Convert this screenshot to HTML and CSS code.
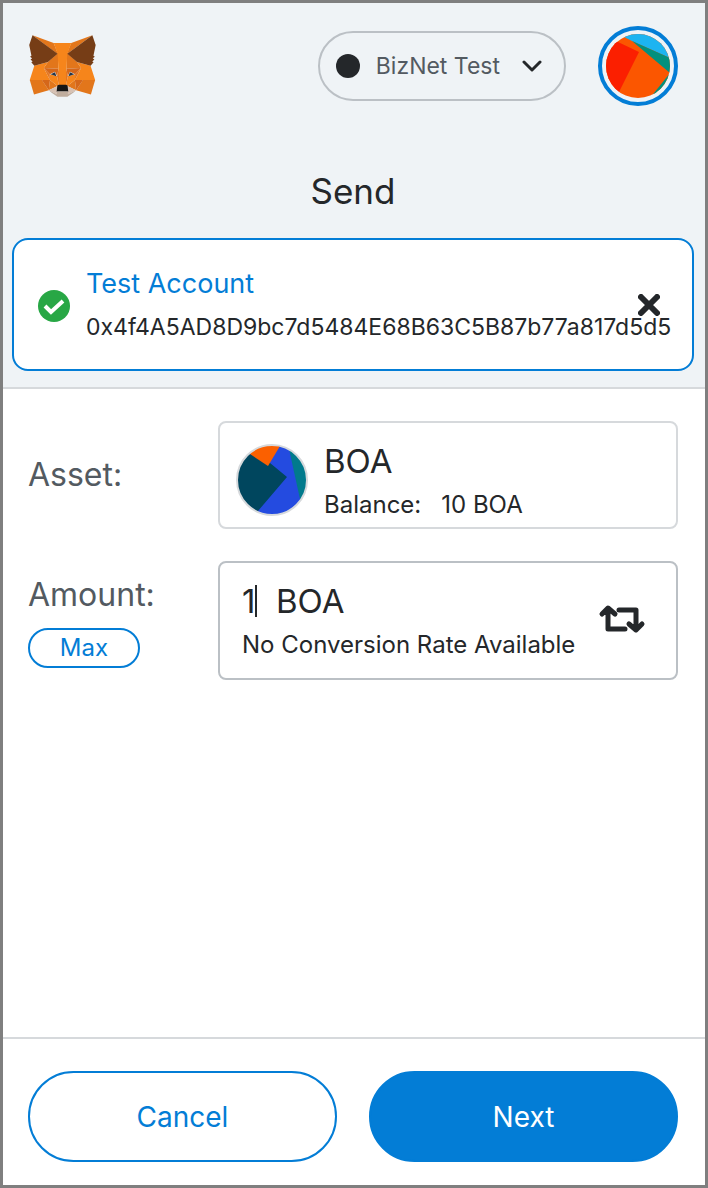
FILE: index.html
```html
<!DOCTYPE html>
<html lang="en">
<head>
<meta charset="utf-8">
<meta name="viewport" content="width=device-width, initial-scale=1">
<title>Send</title>
<link rel="stylesheet" href="styles.css">
</head>
<body>
<div class="app">
  <header class="top">
    <a class="logo" href="#" aria-label="Home">
      <svg viewBox="31 35 257 238" aria-hidden="true">
        <g fill="#e2761b">
          <polygon points="274.1,35.5 174.6,109.4 193,65.8"/>
          <polygon points="44.4,35.5 143.1,110.1 125.6,65.8"/>
          <polygon points="238.3,206.8 211.8,247.4 268.5,263 284.8,207.7"/>
          <polygon points="33.9,207.7 50.1,263 106.8,247.4 80.3,206.8"/>
          <polygon points="103.6,138.2 87.8,162.1 144.1,164.6 142.1,104.1"/>
          <polygon points="214.9,138.2 175.9,103.4 174.6,164.6 230.8,162.1"/>
          <polygon points="106.8,247.4 140.6,230.9 111.4,208.1"/>
          <polygon points="177.9,230.9 211.8,247.4 207.1,208.1"/>
        </g>
        <g fill="#d7c1b3">
          <polygon points="211.8,247.4 177.9,230.9 180.6,253 180.3,262.3"/>
          <polygon points="106.8,247.4 138.3,262.3 138.1,253 140.6,230.9"/>
        </g>
        <g fill="#d5671a">
          <polygon points="106.8,247.4 111.6,206.8 80.3,207.7"/>
          <polygon points="207,206.8 211.8,247.4 238.3,207.7"/>
          <polygon points="230.8,162.1 174.6,164.6 179.8,193.5 188.1,176.1 208.1,185.2"/>
          <polygon points="110.6,185.2 130.6,176.1 138.8,193.5 144.1,164.6 87.8,162.1"/>
        </g>
        <g fill="#e4751f">
          <polygon points="87.8,162.1 111.4,208.1 110.6,185.2"/>
          <polygon points="208.1,185.2 207.1,208.1 230.8,162.1"/>
          <polygon points="144.1,164.6 138.8,193.5 145.4,227.6 146.9,182.7"/>
          <polygon points="174.6,164.6 171.9,182.6 173.1,227.6 179.8,193.5"/>
        </g>
        <g fill="#f6851b">
          <polygon points="179.8,193.5 173.1,227.6 177.9,230.9 207.1,208.1 208.1,185.2"/>
          <polygon points="110.6,185.2 111.4,208.1 140.6,230.9 145.4,227.6 138.8,193.5"/>
          <polygon points="267.2,153.5 214.9,138.2 230.8,162.1 207.1,208.1 238.3,207.7 284.8,207.7"/>
          <polygon points="103.6,138.2 51.3,153.5 33.9,207.7 80.3,207.7 111.4,208.1 87.8,162.1"/>
          <polygon points="174.6,164.6 177.9,106.9 193.1,65.8 125.6,65.8 140.6,106.9 144.1,164.6 145.3,182.8 145.4,227.6 173.1,227.6 173.3,182.8"/>
        </g>
        <g fill="#233447">
          <polygon points="136,193.5 114,186 130.5,178"/>
          <polygon points="182.5,193.5 188,178 204.5,186"/>
        </g>
        <polygon fill="#c0ad9e" points="180.3,262.3 180.6,253 178.1,250.8 140.4,250.8 138.1,253 138.3,262.3 106.8,247.4 117.8,256.4 140.1,271.9 178.4,271.9 200.8,256.4 211.8,247.4"/>
        <polygon fill="#161616" points="179,229 173.1,226 145.4,226 139.6,229 137,253 140.4,250.8 178.1,250.8 181.6,253"/>
        <g fill="#763d16">
          <polygon points="278.3,114.2 286.8,73.4 274.1,35.5 177.9,106.9 214.9,138.2 267.2,153.5 278.8,140 273.8,136.4 281.8,129.1 275.6,124.3 283.6,118.2"/>
          <polygon points="31.8,73.4 40.3,114.2 34.9,118.2 42.9,124.3 36.8,129.1 44.8,136.4 39.8,140 51.3,153.5 103.6,138.2 140.6,106.9 44.4,35.5"/>
        </g>
      </svg>
    </a>
    <button class="network" type="button">
      <span class="dot"></span>
      <span class="network-name">BizNet Test</span>
      <svg class="chevron" viewBox="0 0 20 12" aria-hidden="true"><path d="M2 2l8 8 8-8"/></svg>
    </button>
    <button class="avatar" type="button" aria-label="Account menu">
      <svg viewBox="0 0 64 64" aria-hidden="true">
        <clipPath id="avatar-clip"><circle cx="32" cy="32" r="32"/></clipPath>
        <g clip-path="url(#avatar-clip)">
          <path fill="#fb5600" d="M0 0h64v64H0z"/>
          <path fill="#1cb4f1" d="M14 0h50v24L26 7 18 3z"/>
          <path fill="#02907d" d="M26 7l38 17v15z"/>
          <path fill="#02907d" d="M64 39v25H44z"/>
          <path fill="#fb1f00" d="M0 2l12 6 21 10-20 40-13 6z"/>
        </g>
      </svg>
    </button>
  </header>

  <section class="recipient">
    <h1 class="title">Send</h1>
    <div class="card">
      <svg class="check" viewBox="0 0 32 32" aria-hidden="true">
        <circle cx="16" cy="16" r="16" fill="#28a745"/>
        <path d="M7 16l6 6L25 11" fill="none" stroke="#fff" stroke-width="4"/>
      </svg>
      <div class="account">
        <div class="account-name">Test Account</div>
        <div class="address">0x4f4A5AD8D9bc7d5484E68B63C5B87b77a817d5d5</div>
      </div>
      <button class="clear" type="button" aria-label="Remove recipient">
        <svg viewBox="0 0 22 22" aria-hidden="true"><path d="M3 3l16 16M19 3L3 19"/></svg>
      </button>
    </div>
  </section>

  <main class="form">
    <div class="row">
      <div class="label">Asset:</div>
      <div class="box asset">
        <svg class="token" viewBox="0 0 72 72" aria-hidden="true">
          <clipPath id="token-clip"><circle cx="36" cy="36" r="35"/></clipPath>
          <g clip-path="url(#token-clip)">
            <path fill="#244be0" d="M0 0h72v72H0z"/>
            <path fill="#017a8c" d="M53 5h19v62l-8-12z"/>
            <path fill="#00465e" d="M0 0l14 10 20 9 17 14-29 34L0 72z"/>
            <path fill="#fb6000" d="M4 2L14 10l18 12L44 2V0H4z"/>
          </g>
          <circle cx="36" cy="36" r="35" fill="none" stroke="#d6d9dc" stroke-width="2"/>
        </svg>
        <div class="lines">
          <div class="big">BOA</div>
          <div class="small balance"><span>Balance:</span><span>10 BOA</span></div>
        </div>
      </div>
    </div>
    <div class="row">
      <div class="label">
        <label for="amount">Amount:</label>
        <button class="max" type="button">Max</button>
      </div>
      <div class="box amount">
        <div class="lines">
          <div class="big entry"><input id="amount" type="text" value="1"><span class="caret"></span><span class="unit">BOA</span></div>
          <div class="small">No Conversion Rate Available</div>
        </div>
        <button class="swap" type="button" aria-label="Swap currency">
          <svg viewBox="0 0 44 28" aria-hidden="true"><path d="M2 9l6-6 7 6M8 4v20h17M19 5h17v19M29 19l7 6 6-6"/></svg>
        </button>
      </div>
    </div>
  </main>

  <footer class="actions">
    <button class="action cancel" type="button">Cancel</button>
    <button class="action next" type="button">Next</button>
  </footer>
</div>
</body>
</html>
```
FILE: styles.css
```css
* { box-sizing: border-box; }

body {
  margin: 0;
  font-family: Inter, "Liberation Sans", sans-serif;
  color: #24272a;
}

button, input {
  margin: 0;
  padding: 0;
  border: 0;
  background: none;
  font: inherit;
  color: inherit;
}

svg { display: block; }

.app {
  display: flex;
  flex-direction: column;
  min-height: 100vh;
  border: 3px solid #7f7f7f;
  background: #fff;
}

.top {
  display: flex;
  align-items: center;
  gap: 32px;
  padding: 23px 27px 24px 26px;
  background: #eff3f6;
}

.logo { margin-right: auto; }
.logo svg { width: 67px; height: 62px; }

.network {
  display: flex;
  align-items: center;
  height: 70px;
  padding: 0 22px 0 16px;
  border: 2px solid #bbc0c5;
  border-radius: 35px;
  font-size: 23px;
  color: #535a61;
}
.dot { width: 24px; height: 24px; border-radius: 50%; background: #24272a; }
.network-name { margin: 0 22px 0 16px; }
.chevron {
  width: 20px;
  height: 12px;
  fill: none;
  stroke: #24272a;
  stroke-width: 3;
  stroke-linecap: round;
  stroke-linejoin: round;
}

.avatar {
  width: 80px;
  height: 80px;
  padding: 4px;
  border: 4px solid #037dd6;
  border-radius: 50%;
}

.recipient {
  padding: 39px 11px 16px 9px;
  border-bottom: 2px solid #d6d9dc;
  background: #eff3f6;
}
.title {
  margin: 0 0 25px;
  font-size: 35px;
  font-weight: 400;
  line-height: 44px;
  text-align: center;
}

.card {
  position: relative;
  display: flex;
  align-items: center;
  gap: 16px;
  padding: 22px 16px 20px 24px;
  border: 2px solid #037dd6;
  border-radius: 16px;
  background: #fff;
}
.check { flex: none; width: 32px; height: 32px; }
.account { min-width: 0; }
.account-name { font-size: 27px; line-height: 44px; color: #037dd6; }
.address { font-size: 23px; line-height: 43px; white-space: nowrap; }
.clear { position: absolute; top: 54px; right: 32px; }
.clear svg {
  width: 22px;
  height: 22px;
  stroke: #24272a;
  stroke-width: 6;
  stroke-linecap: round;
}

.form {
  display: flex;
  flex: 1;
  flex-direction: column;
  gap: 32px;
  padding: 32px 27px 32px 25px;
}
.row { display: flex; }
.label {
  flex: none;
  width: 190px;
  padding-top: 14px;
  font-size: 32px;
  line-height: 40px;
  color: #535a61;
}
.row:first-child .label { align-self: center; padding: 0; }
.label label { display: block; margin-bottom: 13px; }

.box {
  display: flex;
  flex: 1;
  align-items: center;
  min-width: 0;
  border: 2px solid #d6d9dc;
  border-radius: 8px;
}
.asset { gap: 16px; height: 108px; padding: 10px 16px 0; }
.asset .lines { padding-top: 6px; }
.amount { height: 119px; padding: 0 32px 0 22px; border-color: #bbc0c5; }
.amount .lines { padding-top: 4px; }
.token { flex: none; width: 72px; height: 72px; }
.big { font-size: 33px; line-height: 44px; }
.small { font-size: 24px; line-height: 44px; white-space: nowrap; }
.balance { display: flex; gap: 20px; }

.entry { display: flex; align-items: center; }
.entry input { width: 13px; height: 44px; outline: 0; }
.caret { width: 2px; height: 32px; background: #24272a; }
.unit { margin-left: 19px; }

.swap { margin: 0 0 4px auto; }
.swap svg {
  width: 44px;
  height: 28px;
  fill: none;
  stroke: #24272a;
  stroke-width: 5;
  stroke-linecap: round;
  stroke-linejoin: round;
  overflow: visible;
}

.max {
  display: block;
  width: 112px;
  height: 40px;
  border: 2px solid #037dd6;
  border-radius: 20px;
  font-size: 24px;
  line-height: 36px;
  color: #037dd6;
}

.actions {
  display: flex;
  gap: 32px;
  padding: 32px 27px 23px 25px;
  border-top: 2px solid #d6d9dc;
}
.action {
  flex: 1;
  height: 91px;
  border: 2px solid #037dd6;
  border-radius: 46px;
  font-size: 28px;
}
.cancel { color: #037dd6; }
.next { background: #037dd6; color: #fff; }
```
